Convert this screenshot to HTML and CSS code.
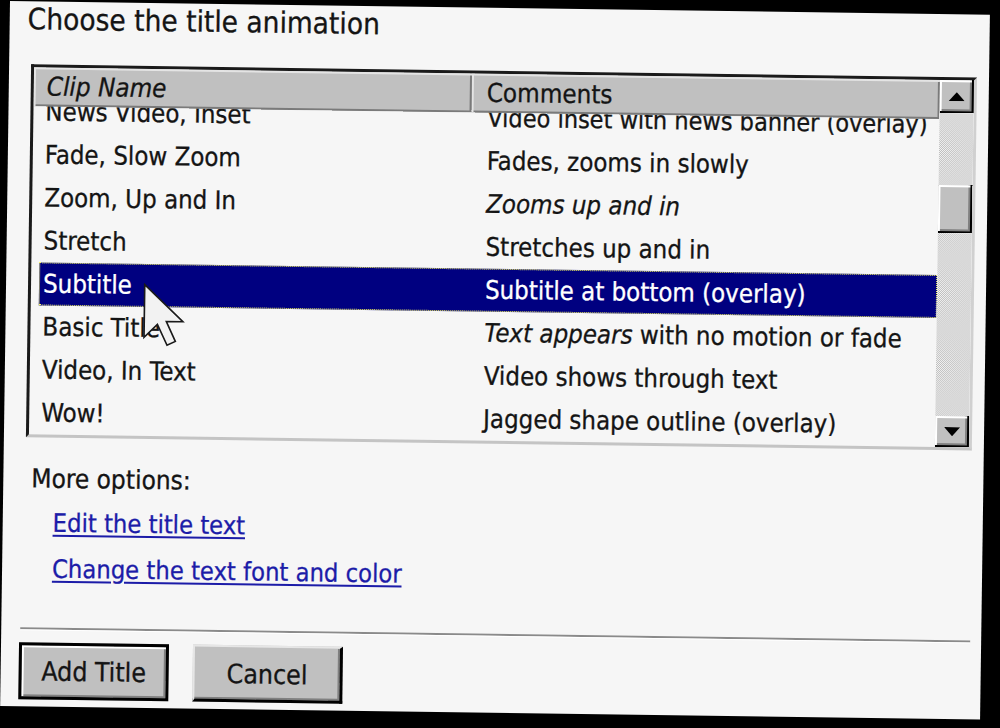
FILE: index.html
```html
<!DOCTYPE html>
<html>
<head>
<meta charset="utf-8">
<link rel="stylesheet" href="styles.css">
</head>
<body>
<div class="panel">
  <div class="title">Choose the title animation</div>
  <div class="listbox">
    <div class="listmain">
      <div class="header">
        <div class="hcell c1"><span class="it">Clip Name</span></div>
        <div class="hcell c2">Comments</div>
      </div>
      <div class="rows">
        <div class="row first"><div class="cell c1">News Video, Inset</div><div class="cell c2">Video inset with news banner (overlay)</div></div>
        <div class="row"><div class="cell c1">Fade, Slow Zoom</div><div class="cell c2">Fades, zooms in slowly</div></div>
        <div class="row"><div class="cell c1">Zoom, Up and In</div><div class="cell c2"><span class="it">Zooms up and in</span></div></div>
        <div class="row"><div class="cell c1">Stretch</div><div class="cell c2">Stretches up and in</div></div>
        <div class="row sel"><div class="cell c1">Subtitle</div><div class="cell c2">Subtitle at bottom (overlay)</div></div>
        <div class="row"><div class="cell c1">Basic Title</div><div class="cell c2"><span class="it">Text appears</span> with no motion or fade</div></div>
        <div class="row"><div class="cell c1">Video, In Text</div><div class="cell c2">Video shows through text</div></div>
        <div class="row"><div class="cell c1">Wow!</div><div class="cell c2">Jagged shape outline (overlay)</div></div>
      </div>
    </div>
    <div class="vscroll">
      <div class="sbtn up"><svg width="16" height="9" viewBox="0 0 16 9"><polygon points="8,0 16,9 0,9" fill="#000"/></svg></div>
      <div class="track t1"></div>
      <div class="thumb"></div>
      <div class="track t2"></div>
      <div class="sbtn down"><svg width="16" height="9" viewBox="0 0 16 9"><polygon points="0,0 16,0 8,9" fill="#000"/></svg></div>
    </div>
    <svg class="cursor" viewBox="0 0 13 20" width="43" height="66"><path d="M0.5 0.5 L0.5 16.5 L4.5 12.5 L7.5 18.8 L10 17.6 L7.2 11.6 L12.2 11.6 Z" fill="#f2f2f2" stroke="#1a1a1a" stroke-width="0.5" stroke-linejoin="miter"/></svg>
  </div>
  <div class="more">More options:</div>
  <a class="link l1" href="#">Edit the title text</a>
  <a class="link l2" href="#">Change the text font and color</a>
  <div class="sep"></div>
  <div class="buttons">
    <button class="btn default">Add Title</button>
    <button class="btn normal">Cancel</button>
  </div>
</div>
</body>
</html>
```
FILE: styles.css
```css
html, body {
  margin: 0;
  padding: 0;
}
body {
  background: #000;
  width: 1000px;
  height: 728px;
  overflow: hidden;
  font-family: "DejaVu Sans Condensed", "DejaVu Sans", sans-serif;
  font-stretch: condensed;
  color: #141414;
  -webkit-text-stroke: 0.3px currentColor;
}
.panel {
  margin: 1px 0 0 10px;
  width: 980px;
  height: 705px;
  background: #f6f6f6;
  transform: rotate(0.8deg);
  transform-origin: 0 0;
  display: flex;
  flex-direction: column;
  align-items: flex-start;
}
.title {
  margin: 2px 0 0 18px;
  font-size: 29.5px;
  line-height: 33px;
  white-space: nowrap;
}
.listbox {
  margin: 28px 0 0 22px;
  width: 946px;
  height: 373px;
  box-sizing: border-box;
  border: 3px solid;
  border-color: #1a1a1a #d0d0d0 #c4c4c4 #1a1a1a;
  display: flex;
  position: relative;
  background: #f6f6f6;
}
.listmain {
  width: 906px;
  display: flex;
  flex-direction: column;
  overflow: hidden;
}
.header {
  display: flex;
  height: 39px;
  flex: none;
  background: #c0c0c0;
}
.hcell {
  box-sizing: border-box;
  height: 39px;
  line-height: 39px;
  font-size: 25.8px;
  white-space: nowrap;
  box-shadow: inset 2px 2px 0 #e4e4e4, inset -2px -2px 0 #7a7a7a;
}
.hcell.c1 {
  width: 438px;
  padding-left: 13px;
}
.hcell.c2 {
  width: 468px;
  padding-left: 15px;
}
.it {
  font-style: italic;
}
.rows {
  flex: 1;
  overflow: hidden;
}
.row {
  display: flex;
  height: 43px;
  line-height: 43px;
  margin-left: 8px;
  font-size: 25.6px;
  white-space: nowrap;
}
.row.first {
  margin-top: -16px;
}
.cell {
  box-sizing: border-box;
  overflow: hidden;
}
.row .c1 {
  width: 430px;
  padding-left: 4px;
}
.row .c2 {
  width: 468px;
  padding-left: 16px;
}
.row.first .c2 {
  font-size: 25px;
}
.row.sel {
  background: #000080;
  color: #fff;
  outline: 1px dotted #ffff60;
  outline-offset: -1px;
}
.vscroll {
  width: 34px;
  display: flex;
  flex-direction: column;
}
.sbtn, .thumb {
  background: #c0c0c0;
  box-shadow: inset -2px -2px 0 #000, inset 2px 2px 0 #fff, inset -4px -4px 0 #808080;
}
.sbtn {
  display: flex;
  align-items: center;
  justify-content: center;
}
.sbtn.up {
  height: 33px;
}
.sbtn.down {
  height: 31px;
}
.track {
  background-color: #fff;
  background-image: repeating-conic-gradient(#bdbdbd 0 25%, #f4f4f4 0 50%);
  background-size: 2px 2px;
}
.t1 {
  height: 72px;
}
.thumb {
  height: 48px;
}
.t2 {
  flex: 1;
}
.cursor {
  position: absolute;
  left: 112px;
  top: 214px;
}
.more {
  margin: 26px 0 0 28px;
  font-size: 26px;
  line-height: 30px;
}
.link {
  display: block;
  margin-left: 50px;
  font-size: 25.3px;
  line-height: 30px;
  color: #1c1ca8;
  text-decoration: underline;
  text-decoration-thickness: 2px;
  text-underline-offset: 3px;
  white-space: nowrap;
}
.l1 {
  margin-top: 15px;
}
.l2 {
  margin-top: 16px;
}
.sep {
  margin: 43px 0 0 19px;
  width: 950px;
  height: 0;
  border-top: 2px solid #8a8a8a;
  border-bottom: 1px solid #ffffff;
}
.buttons {
  margin: 12px 0 0 18px;
  display: flex;
  gap: 24px;
}
.btn {
  width: 150px;
  height: 57px;
  box-sizing: border-box;
  padding: 0;
  font-family: inherit;
  font-stretch: condensed;
  font-size: 26.5px;
  color: #141414;
  background: #c0c0c0;
}
.btn.default {
  border: 3px solid #000;
  box-shadow: inset 2px 2px 0 #fff, inset -2px -2px 0 #808080;
}
.btn.normal {
  border-style: solid;
  border-width: 2px 3px 3px 2px;
  border-color: #e6e6e6 #000 #000 #e6e6e6;
  box-shadow: inset -2px -2px 0 #808080;
}
```
